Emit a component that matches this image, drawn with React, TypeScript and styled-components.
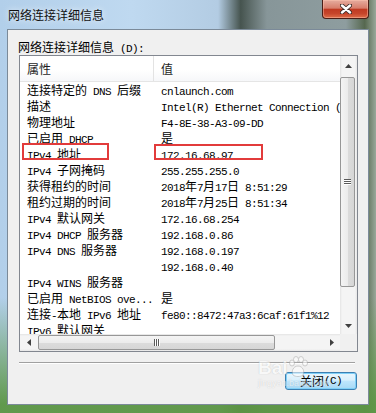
import styled, { createGlobalStyle } from "styled-components"

const GlobalStyle = createGlobalStyle`
  html, body {
    margin: 0;
    padding: 0;
    background: #fff;
  }
  body {
    font-family: "Noto Sans CJK SC", sans-serif;
    color: #000;
  }
`

const rows: [string, string][] = [
  ["连接特定的 DNS 后缀", "cnlaunch.com"],
  ["描述", "Intel(R) Ethernet Connection (2) I219-V"],
  ["物理地址", "F4-8E-38-A3-09-DD"],
  ["已启用 DHCP", "是"],
  ["IPv4 地址", "172.16.68.97"],
  ["IPv4 子网掩码", "255.255.255.0"],
  ["获得租约的时间", "2018年7月17日 8:51:29"],
  ["租约过期的时间", "2018年7月25日 8:51:34"],
  ["IPv4 默认网关", "172.16.68.254"],
  ["IPv4 DHCP 服务器", "192.168.0.86"],
  ["IPv4 DNS 服务器", "192.168.0.197"],
  ["", "192.168.0.40"],
  ["IPv4 WINS 服务器", ""],
  ["已启用 NetBIOS ove...", "是"],
  ["连接-本地 IPv6 地址", "fe80::8472:47a3:6caf:61f1%12"],
  ["IPv6 默认网关", ""],
]

const Window = styled.div`
  position: relative;
  width: 376px;
  height: 413px;
  box-sizing: border-box;
  padding: 0 7px 8px 7px;
  display: flex;
  flex-direction: column;
  overflow: hidden;
  background:
    linear-gradient(180deg, rgba(100, 155, 75, 0) 0%, rgba(100, 155, 75, 0) 72%, rgba(92, 150, 68, 0.95) 98%),
    linear-gradient(90deg, #b2cfea 0%, #bfd9f0 35%, #b3cce3 58%, #46544f 64%, #879699 71%, #8e9d9f 92%, #56684f 97%, #9aa89a 100%);
`

const TitleBar = styled.div`
  height: 29px;
  display: flex;
  align-items: flex-start;
  justify-content: space-between;
`

const Title = styled.div`
  margin: 8px 0 0 1px;
  font-size: 12px;
  line-height: 14px;
  color: #111;
  text-shadow: 0 0 6px rgba(255, 255, 255, 0.9);
`

const CloseBtn = styled.div`
  width: 47px;
  height: 19px;
  box-sizing: border-box;
  border: 1px solid #4a1e16;
  border-top: none;
  border-radius: 0 0 4px 4px;
  display: flex;
  align-items: center;
  justify-content: center;
  background: linear-gradient(180deg, #e6ad9f 0%, #d77e6c 45%, #c03a22 52%, #c6452b 75%, #de6d48 100%);
  box-shadow: inset 0 0 0 1px rgba(255, 200, 180, 0.45);
`

const Client = styled.div`
  flex: 1;
  display: flex;
  flex-direction: column;
  box-sizing: border-box;
  padding: 10px 10px 0 11px;
  background: #f0f0f0;
  border: 1px solid #7b8a99;
`

const Label = styled.div`
  margin-left: -1px;
  font-size: 12px;
  line-height: 14px;
  height: 14px;
  white-space: nowrap;
`

const Half = styled.span`
  font-family: "Liberation Mono", monospace;
  font-size: 11px;
  letter-spacing: -0.6px;
  white-space: pre;
`

const Full = styled.span`
  font-family: "Noto Sans CJK SC", sans-serif;
  font-size: 12px;
  white-space: pre;
`

const Mixed = ({ text }: { text: string }) => (
  <>
    {(text.match(/[\x00-\x7f]+|[^\x00-\x7f]+/g) || []).map((run, i) =>
      /^[\x00-\x7f]/.test(run) ? <Half key={i}>{run}</Half> : <Full key={i}>{run}</Full>
    )}
  </>
)

const ListBox = styled.div`
  margin-top: 1px;
  height: 297px;
  box-sizing: border-box;
  border: 1px solid #828790;
  background: #fff;
  display: grid;
  grid-template-columns: 1fr 17px;
  grid-template-rows: 1fr 17px;
  overflow: hidden;
`

const Viewport = styled.div`
  min-width: 0;
  min-height: 0;
  overflow: hidden;
`

const HeaderRow = styled.div`
  display: grid;
  grid-template-columns: 134px 1fr;
  height: 25px;
  border-bottom: 1px solid #e5e5e5;
  background: linear-gradient(180deg, #ffffff 0%, #ffffff 55%, #f6f7f9 100%);
`

const HeaderCell = styled.div<{ $divider?: boolean }>`
  padding-left: 7px;
  font-size: 12px;
  line-height: 25px;
  color: #1e1e1e;
  border-right: ${(p) => (p.$divider ? "1px solid #e3e3e3" : "none")};
`

const Row = styled.div`
  display: grid;
  grid-template-columns: 134px 1fr;
  height: 16px;
`

const Cell = styled.div`
  padding-left: 7px;
  font-size: 12px;
  line-height: 16px;
  height: 16px;
  white-space: nowrap;
  overflow: hidden;
`

const VScroll = styled.div`
  display: flex;
  flex-direction: column;
  background: linear-gradient(90deg, #e4e4e4 0, #f4f4f4 2px, #f4f4f4 15px, #e6e6e6 17px);
`

const HScroll = styled.div`
  display: flex;
  background: linear-gradient(180deg, #e4e4e4 0, #f4f4f4 2px, #f4f4f4 15px, #e6e6e6 17px);
`

const ArrowBtn = styled.div<{ $size: number }>`
  flex: 0 0 ${(p) => p.$size}px;
  display: flex;
  align-items: center;
  justify-content: center;
`

const Track = styled.div<{ $vertical?: boolean }>`
  flex: 1;
  display: flex;
  flex-direction: ${(p) => (p.$vertical ? "column" : "row")};
  padding: ${(p) => (p.$vertical ? "1px 0 0 0" : "0 0 0 1px")};
`

const Thumb = styled.div<{ $vertical?: boolean }>`
  box-sizing: border-box;
  ${(p) =>
    p.$vertical
      ? "width: 15px; height: 210px; margin-left: 0;"
      : "height: 15px; width: 237px; margin-top: 1px;"}
  border: 1px solid #979797;
  border-radius: 2px;
  display: flex;
  align-items: center;
  justify-content: center;
  background: ${(p) =>
    p.$vertical
      ? "linear-gradient(90deg, #f4f4f4 0%, #ececec 50%, #dcdcdc 51%, #d6d6d6 100%)"
      : "linear-gradient(180deg, #f4f4f4 0%, #ececec 50%, #dcdcdc 51%, #d6d6d6 100%)"};
`

const Corner = styled.div`
  background: #f0f0f0;
`

const Separator = styled.div`
  margin: 10px 3px 0 0;
  height: 2px;
  box-sizing: border-box;
  border-top: 1px solid #a0a0a0;
  border-bottom: 1px solid #ffffff;
`

const Footer = styled.div`
  display: flex;
  justify-content: flex-end;
  margin-top: 8px;
`

const Button = styled.div`
  margin-right: 1px;
  width: 72px;
  height: 18px;
  box-sizing: border-box;
  border: 1px solid #3c7fb1;
  border-radius: 3px;
  display: flex;
  align-items: center;
  justify-content: center;
  line-height: 16px;
  background: linear-gradient(180deg, #eaf6fd 0%, #d9f0fc 45%, #bee6fd 50%, #a7d9f5 100%);
  box-shadow: inset 0 0 0 1px #7fd0f8;
`

const Mark = styled.div<{ $left: number; $top: number; $width: number; $height: number }>`
  position: absolute;
  left: ${(p) => p.$left}px;
  top: ${(p) => p.$top}px;
  width: ${(p) => p.$width}px;
  height: ${(p) => p.$height}px;
  box-sizing: border-box;
  border: 2px solid #e23b3b;
`

const Watermark = styled.div`
  position: absolute;
  left: 258px;
  top: 356px;
  display: flex;
  flex-direction: column;
  opacity: 0.55;
  pointer-events: none;
`

const WaterLogo = styled.div`
  display: flex;
  align-items: flex-end;
  font-family: "Liberation Sans", sans-serif;
  font-weight: bold;
  font-size: 19px;
  line-height: 20px;
  color: #ffffff;
  text-shadow: 0 0 1px #9a9a9a;
`

const WaterSite = styled.div`
  font-family: "Liberation Sans", sans-serif;
  font-size: 9px;
  line-height: 10px;
  color: #ffffff;
  text-shadow: 0 0 1px #a0a0a0;
`

const UpArrow = () => (
  <svg width="7" height="4" viewBox="0 0 7 4">
    <polygon points="3.5,0 7,4 0,4" fill="#404040" />
  </svg>
)

const DownArrow = () => (
  <svg width="7" height="4" viewBox="0 0 7 4">
    <polygon points="0,0 7,0 3.5,4" fill="#404040" />
  </svg>
)

const LeftArrow = () => (
  <svg width="4" height="7" viewBox="0 0 4 7">
    <polygon points="4,0 4,7 0,3.5" fill="#404040" />
  </svg>
)

const RightArrow = () => (
  <svg width="4" height="7" viewBox="0 0 4 7">
    <polygon points="0,0 4,3.5 0,7" fill="#404040" />
  </svg>
)

const GripV = () => (
  <svg width="7" height="6" viewBox="0 0 7 6">
    <rect x="0" y="0" width="7" height="1" fill="#5a5a5a" />
    <rect x="0" y="2" width="7" height="1" fill="#5a5a5a" />
    <rect x="0" y="4" width="7" height="1" fill="#5a5a5a" />
    <rect x="0" y="1" width="7" height="1" fill="#ffffff" />
    <rect x="0" y="3" width="7" height="1" fill="#ffffff" />
    <rect x="0" y="5" width="7" height="1" fill="#ffffff" />
  </svg>
)

const GripH = () => (
  <svg width="6" height="7" viewBox="0 0 6 7">
    <rect x="0" y="0" width="1" height="7" fill="#5a5a5a" />
    <rect x="2" y="0" width="1" height="7" fill="#5a5a5a" />
    <rect x="4" y="0" width="1" height="7" fill="#5a5a5a" />
    <rect x="1" y="0" width="1" height="7" fill="#ffffff" />
    <rect x="3" y="0" width="1" height="7" fill="#ffffff" />
    <rect x="5" y="0" width="1" height="7" fill="#ffffff" />
  </svg>
)

const CloseX = () => (
  <svg width="12" height="10" viewBox="0 0 12 10">
    <path d="M2 1.5 L10 8.5 M10 1.5 L2 8.5" stroke="#3b2a26" strokeWidth="4.2" strokeLinecap="round" />
    <path d="M2 1.5 L10 8.5 M10 1.5 L2 8.5" stroke="#ffffff" strokeWidth="2.4" strokeLinecap="round" />
  </svg>
)

const Paw = () => (
  <svg width="20" height="22" viewBox="0 0 20 22">
    <g fill="#ffffff" stroke="#9a9a9a" strokeWidth="0.8">
      <ellipse cx="4" cy="7" rx="2.5" ry="3" />
      <ellipse cx="8" cy="3.5" rx="2.5" ry="3" />
      <ellipse cx="13" cy="3.5" rx="2.5" ry="3" />
      <ellipse cx="17" cy="7" rx="2.5" ry="3" />
      <path d="M10 10 C5 10 3 16 5 19 C7 21 13 21 15 19 C17 16 15 10 10 10 Z" />
    </g>
  </svg>
)

export default function App() {
  return (
    <>
      <GlobalStyle />
      <Window>
        <TitleBar>
          <Title>网络连接详细信息</Title>
          <CloseBtn>
            <CloseX />
          </CloseBtn>
        </TitleBar>
        <Client>
          <Label>
            <Mixed text="网络连接详细信息 (D):" />
          </Label>
          <ListBox>
            <Viewport>
              <HeaderRow>
                <HeaderCell $divider>属性</HeaderCell>
                <HeaderCell>值</HeaderCell>
              </HeaderRow>
              {rows.map(([name, value], i) => (
                <Row key={i}>
                  <Cell>
                    <Mixed text={name} />
                  </Cell>
                  <Cell>
                    <Mixed text={value} />
                  </Cell>
                </Row>
              ))}
            </Viewport>
            <VScroll>
              <ArrowBtn $size={20}>
                <UpArrow />
              </ArrowBtn>
              <Track $vertical>
                <Thumb $vertical>
                  <GripV />
                </Thumb>
              </Track>
              <ArrowBtn $size={17}>
                <DownArrow />
              </ArrowBtn>
            </VScroll>
            <HScroll>
              <ArrowBtn $size={17}>
                <LeftArrow />
              </ArrowBtn>
              <Track>
                <Thumb>
                  <GripH />
                </Thumb>
              </Track>
              <ArrowBtn $size={17}>
                <RightArrow />
              </ArrowBtn>
            </HScroll>
            <Corner />
          </ListBox>
          <Separator />
          <Footer>
            <Button>
              <Mixed text="关闭(C)" />
            </Button>
          </Footer>
        </Client>
        <Mark $left={22} $top={143} $width={87} $height={17} />
        <Mark $left={154} $top={144} $width={109} $height={16} />
        <Watermark>
          <WaterLogo>
            Bai
            <Paw />
          </WaterLogo>
          <WaterSite>jingyan.baidu.com</WaterSite>
        </Watermark>
      </Window>
    </>
  )
}
